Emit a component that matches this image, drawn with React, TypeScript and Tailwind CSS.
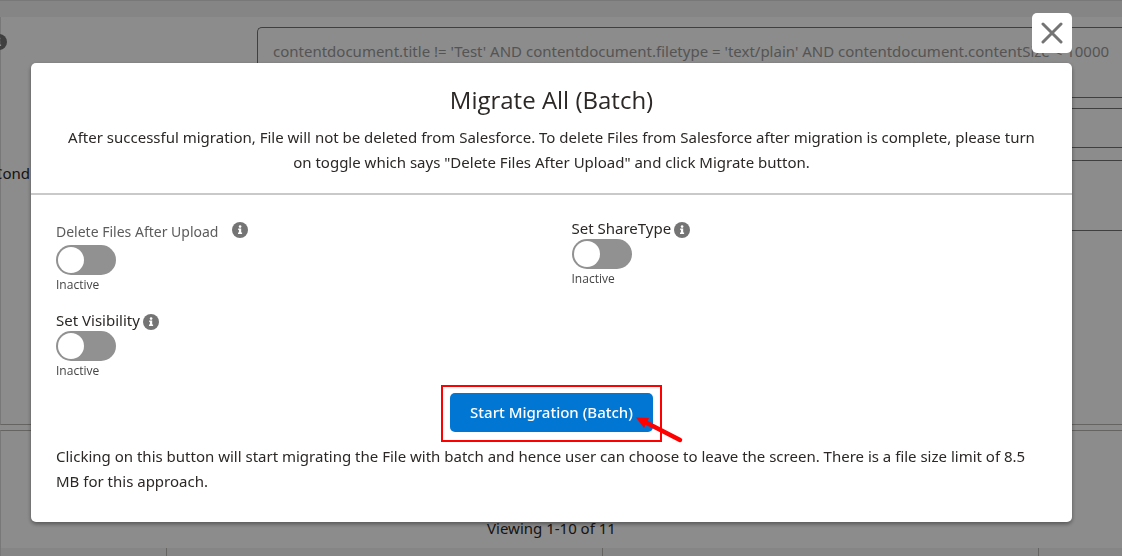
import { useState } from "react";

const InfoIcon = ({ className = "" }: { className?: string }) => (
  <svg viewBox="0 0 16 16" className={`size-4 shrink-0 ${className}`} aria-hidden="true">
    <circle cx="8" cy="8" r="8" fill="#747474" />
    <circle cx="8.1" cy="4.6" r="1.3" fill="#fff" />
    <path d="M6.2 6.6h3v4h.9v1.4H6v-1.4h.9V8h-.7z" fill="#fff" />
  </svg>
);

interface ToggleProps {
  id: string;
  label: string;
  muted?: boolean;
}

const Toggle: React.FC<ToggleProps> = ({ id, label, muted }) => {
  const [checked, setChecked] = useState(false);

  return (
    <div className="px-5">
      <div
        className={
          muted
            ? "flex h-[26px] items-center gap-[14px] text-sm text-[#5c5c5c]"
            : "mb-[2px] flex h-[18px] items-center gap-[3px] text-[15px] leading-5 text-[#2b2826]"
        }
      >
        <label htmlFor={id}>{label}</label>
        <InfoIcon className={muted ? "mb-1" : "mt-[3px]"} />
      </div>
      <label htmlFor={id} className="block w-[60px] cursor-pointer">
        <input
          id={id}
          type="checkbox"
          className="peer sr-only"
          checked={checked}
          onChange={(e) => setChecked(e.target.checked)}
        />
        <span className="flex h-[30px] items-center rounded-full bg-[#919191] px-[2px] peer-checked:justify-end peer-checked:bg-[#0176d3]">
          <span className="size-[26px] rounded-full bg-white" />
        </span>
        <span className="block font-['Open_Sans',sans-serif] text-xs leading-5 text-[#444]">
          {checked ? "Active" : "Inactive"}
        </span>
      </label>
    </div>
  );
};

// Settings page that stays visible, dimmed, behind the dialog
const Background = () => (
  <div className="flex h-screen flex-col overflow-hidden bg-white text-[#2b2826]">
    <div className="h-[17px] shrink-0 border-t border-[#dddbda] bg-[#f3f2f2]" />
    <div className="flex h-[408px] shrink-0 border-b border-l border-b-[#b8b6b5] border-l-[#dddbda] pt-[10px]">
      <div className="flex w-64 shrink-0 flex-col">
        <InfoIcon className="-ml-[10px] mt-[7px]" />
        <label htmlFor="condition" className="-ml-2 mt-[112px] text-[15px]">
          Cond
        </label>
      </div>
      <div className="flex min-w-0 flex-1 flex-col">
        <textarea
          wrap="off"
          aria-label="Filter"
          className="h-[71px] resize-none overflow-hidden rounded-l-[5px] border border-r-0 border-[#747474] px-[15px] py-[11px] text-[15px] leading-6 text-[#9a9a9a]"
          defaultValue="contentdocument.title != 'Test' AND contentdocument.filetype = 'text/plain' AND contentdocument.contentSize < 10000"
        />
        <input
          aria-label="Limit"
          className="mt-[10px] h-10 rounded-l-[5px] border border-r-0 border-[#747474]"
        />
        <textarea
          id="condition"
          className="mt-3 h-[71px] resize-none rounded-l-[5px] border border-r-0 border-[#747474]"
        />
      </div>
    </div>
    <div className="mt-[5px] flex min-h-0 flex-1 flex-col border-l border-t border-l-[#dddbda] border-t-[#b8b6b5]">
      <p className="mt-[85px] pr-5 text-center text-[15px] leading-6">Viewing 1-10 of 11</p>
      <div className="mt-2 flex flex-1 bg-[#f3f2f2]">
        <div className="w-[166px] border-r border-[#b8b6b5]" />
        <div className="w-[436px] border-r border-[#b8b6b5]" />
        <div className="w-[436px] border-r border-[#b8b6b5]" />
      </div>
    </div>
  </div>
);

const MigrateModal = () => (
  <div className="fixed inset-0 flex flex-col bg-black/45 pl-[31px] pr-[50px] pt-[13px]">
    <button
      type="button"
      aria-label="Close"
      className="mb-[10px] flex size-10 shrink-0 items-center justify-center self-end rounded-[5px] bg-white"
    >
      <svg viewBox="0 0 22 22" className="size-[22px]" fill="none" stroke="#747474" strokeWidth="3" strokeLinecap="round">
        <path d="M2 2l18 18M20 2L2 20" />
      </svg>
    </button>
    <section
      role="dialog"
      aria-labelledby="modal-title"
      className="rounded-[5px] bg-white text-[15px] leading-[25px] text-[#2b2826] shadow-[0_2px_4px_rgba(0,0,0,0.4)]"
    >
      <header className="border-b-2 border-[#c9c9c9] px-[30px] pb-[18px] pt-[21px] text-center">
        <h2 id="modal-title" className="font-['Open_Sans',sans-serif] text-2xl leading-8">
          Migrate All (Batch)
        </h2>
        <p className="mt-[9px]">
          After successful migration, File will not be deleted from Salesforce. To delete Files from Salesforce after
          migration is complete, please turn on toggle which says "Delete Files After Upload" and click Migrate button.
        </p>
      </header>
      <div className="px-[5px] pb-7 pt-6">
        <div className="grid grid-cols-2 gap-y-4">
          <Toggle id="delete-files" label="Delete Files After Upload" muted />
          <Toggle id="share-type" label="Set ShareType" />
          <Toggle id="visibility" label="Set Visibility" />
        </div>
        <div className="mt-1 flex justify-center">
          <div className="relative border-2 border-[#fe0000] px-[7px] pb-2 pt-[6px]">
            <button type="button" className="h-[39px] rounded-[5px] bg-[#0176d3] px-5 text-[15px] font-medium text-white">
              Start Migration (Batch)
            </button>
            <svg viewBox="0 0 48 28" className="absolute -bottom-1 -right-6 h-7 w-12" aria-hidden="true">
              <path d="M9 6L44 24" stroke="#fe0000" strokeWidth="4.5" strokeLinecap="round" />
              <path d="M0 1.5L13 2L8 12z" fill="#fe0000" />
            </svg>
          </div>
        </div>
        <p className="mt-[2px] px-5">
          Clicking on this button will start migrating the File with batch and hence user can choose to leave the
          screen. There is a file size limit of 8.5 MB for this approach.
        </p>
      </div>
    </section>
  </div>
);

export default function App() {
  return (
    <main className="font-['Noto_Sans',sans-serif]">
      <Background />
      <MigrateModal />
    </main>
  );
}
